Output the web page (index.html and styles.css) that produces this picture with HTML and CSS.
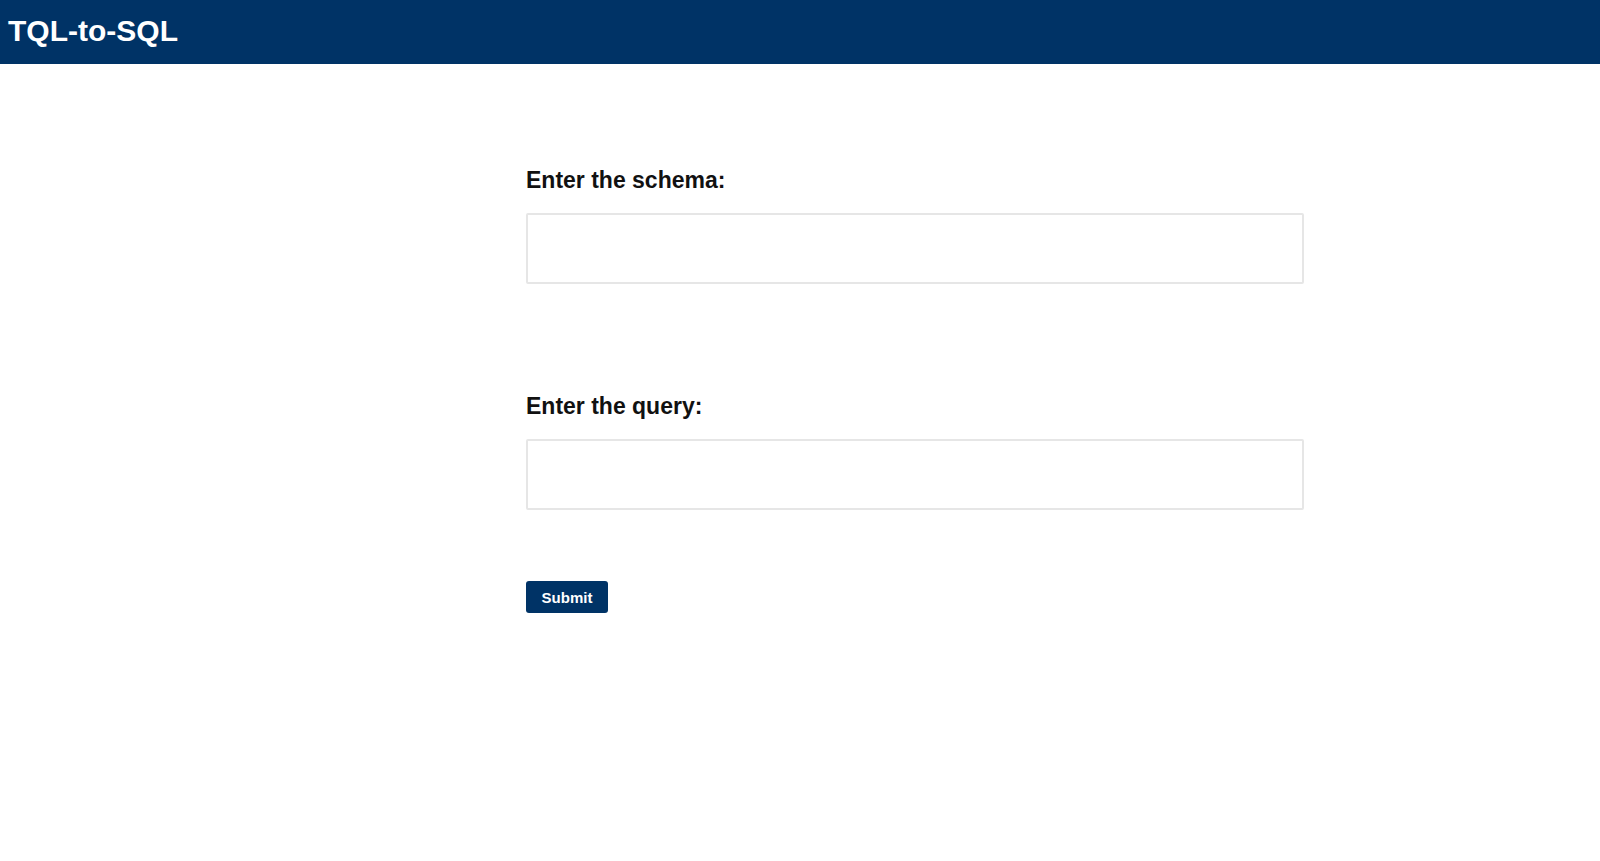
FILE: index.html
```html
<!DOCTYPE html>
<html lang="en">
<head>
<meta charset="utf-8">
<title>TQL-to-SQL</title>
<link rel="stylesheet" href="styles.css">
</head>
<body>
<header class="topbar">
  <h1 class="brand">TQL-to-SQL</h1>
</header>
<main class="page">
  <form class="form">
    <div class="field">
      <label class="label" for="schema">Enter the schema:</label>
      <textarea id="schema" class="input"></textarea>
    </div>
    <div class="field">
      <label class="label" for="query">Enter the query:</label>
      <textarea id="query" class="input"></textarea>
    </div>
    <div class="actions">
      <button type="button" class="btn">Submit</button>
    </div>
  </form>
</main>
</body>
</html>
```
FILE: styles.css
```css
* { box-sizing: border-box; }
html, body { margin: 0; padding: 0; background: #fff; }
body { font-family: "Liberation Sans", Arial, sans-serif; color: #111; }

.topbar {
  background: #003366;
  height: 64px;
  display: flex;
  align-items: center;
  padding-left: 8px;
}
.brand {
  margin: 0;
  color: #fff;
  font-size: 30px;
  font-weight: bold;
  line-height: 1;
  padding-bottom: 3px;
}

.page {
  padding-left: 526px;
  padding-top: 103px;
}
.form {
  width: 778px;
  display: flex;
  flex-direction: column;
}
.field {
  display: flex;
  flex-direction: column;
}
.field + .field { margin-top: 109px; }
.label {
  font-size: 23px;
  font-weight: bold;
  line-height: 27px;
  color: #111;
  margin-bottom: 19px;
}
.input {
  width: 778px;
  height: 71px;
  border: 2px solid #e6e6e6;
  border-radius: 2px;
  resize: none;
  background: #fff;
  font-family: inherit;
}
.actions { margin-top: 71px; }
.btn {
  background: #003366;
  color: #fff;
  border: none;
  border-radius: 3px;
  width: 82px;
  height: 32px;
  font-family: "Liberation Sans", Arial, sans-serif;
  font-weight: bold;
  font-size: 15px;
  padding: 0;
}
```
